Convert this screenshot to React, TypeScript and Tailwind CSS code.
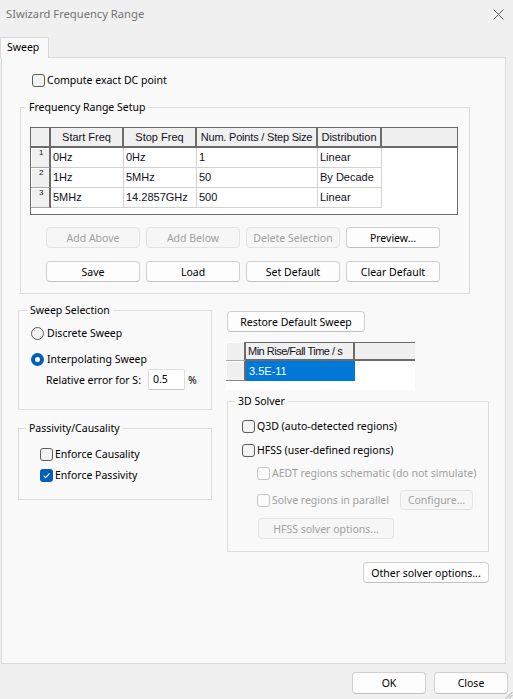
import React from "react";

function Check({ checked = false, disabled = false }: { checked?: boolean; disabled?: boolean }) {
  if (checked) {
    return (
      <span className="w-[13px] h-[13px] rounded-[3px] bg-[#005fb8] flex items-center justify-center shrink-0">
        <svg width="9" height="9" viewBox="0 0 9 9">
          <path d="M1.6 4.7 L3.6 6.6 L7.5 2.3" fill="none" stroke="#ffffff" strokeWidth="1.1" />
        </svg>
      </span>
    );
  }
  return disabled ? (
    <span className="w-[13px] h-[13px] rounded-[3px] border border-[#c6c6c6] bg-[#fbfbfb] shrink-0" />
  ) : (
    <span className="w-[13px] h-[13px] rounded-[3px] border border-[#5c5c5c] bg-[#f3f3f3] shrink-0" />
  );
}

function Radio({ checked = false }: { checked?: boolean }) {
  return checked ? (
    <span className="w-[13px] h-[13px] rounded-full bg-[#005fb8] flex items-center justify-center shrink-0">
      <span className="w-[5px] h-[5px] rounded-full bg-white" />
    </span>
  ) : (
    <span className="w-[13px] h-[13px] rounded-full border border-[#5c5c5c] bg-[#f3f3f3] shrink-0" />
  );
}

function Btn({ children, className = "", disabled = false }: { children: React.ReactNode; className?: string; disabled?: boolean }) {
  return (
    <div
      className={
        disabled
          ? `flex items-center justify-center whitespace-nowrap rounded-[4px] border border-[#e3e3e3] bg-[#f6f6f6] text-[#a0a0a0] ${className}`
          : `flex items-center justify-center whitespace-nowrap rounded-[4px] border border-[#d0d0d0] border-b-[#c0c0c0] bg-[#fdfdfd] text-black ${className}`
      }
    >
      {children}
    </div>
  );
}

const rows = [
  ["1", "0Hz", "0Hz", "1", "Linear"],
  ["2", "1Hz", "5MHz", "50", "By Decade"],
  ["3", "5MHz", "14.2857GHz", "500", "Linear"],
];

function FreqTable() {
  return (
    <div className="mt-[12px] ml-[9px] w-[428px] h-[88px] border border-[#6b6b6b] bg-white font-['Liberation_Sans',Arial,sans-serif] text-[11px] text-[#101020] whitespace-nowrap">
      <div className="flex h-[20px] bg-[#f0f0f0]">
        <div className="w-[20px] border-r-2 border-b-2 border-[#6b6b6b]" />
        <div className="w-[73px] border-r-2 border-b-2 border-[#6b6b6b] text-center leading-[18px]">Start Freq</div>
        <div className="w-[73px] border-r-2 border-b-2 border-[#6b6b6b] text-center leading-[18px]">Stop Freq</div>
        <div className="w-[121px] border-r-2 border-b-2 border-[#6b6b6b] text-center leading-[18px] tracking-[-0.2px]">Num. Points / Step Size</div>
        <div className="w-[64px] border-r-2 border-b-2 border-[#6b6b6b] text-center leading-[18px]">Distribution</div>
        <div className="flex-1 border-b-2 border-[#6b6b6b]" />
      </div>
      {rows.map((r) => (
        <div key={r[0]} className="flex h-[20px]">
          <div className="w-[20px] bg-[#f0f0f0] border-r-2 border-r-[#6b6b6b] border-b border-b-[#a8a8a8] shadow-[inset_1px_1px_0_#ffffff] text-[8px] leading-[10px] pl-[8px]">
            {r[0]}
          </div>
          <div className="w-[73px] border-r border-b border-[#d2d2d2] pl-[2px] leading-[19px]">{r[1]}</div>
          <div className="w-[73px] border-r border-b border-[#d2d2d2] pl-[2px] leading-[19px]">{r[2]}</div>
          <div className="w-[121px] border-r border-b border-[#d2d2d2] pl-[2px] leading-[19px]">{r[3]}</div>
          <div className="w-[64px] border-r border-b border-[#d2d2d2] pl-[2px] leading-[19px]">{r[4]}</div>
        </div>
      ))}
    </div>
  );
}

function RiseTable() {
  return (
    <div className="mt-[10px] w-[189px] h-[48px] bg-white font-['Liberation_Sans',Arial,sans-serif] text-[11px] text-[#101020] whitespace-nowrap">
      <div className="flex h-[19px] bg-[#f0f0f0]">
        <div className="w-[20px] border-r-2 border-b border-r-[#6b6b6b] border-b-[#a8a8a8] shadow-[inset_1px_1px_0_#ffffff]" />
        <div className="w-[109px] overflow-hidden border-t border-r-2 border-b-2 border-[#6b6b6b] pl-[2px] leading-[16px] tracking-[-0.5px]">Min Rise/Fall Time / s</div>
        <div className="flex-1 border-t border-b-2 border-[#6b6b6b]" />
      </div>
      <div className="flex h-[20px]">
        <div className="w-[20px] bg-[#f0f0f0] border-r-2 border-b border-r-[#6b6b6b] border-b-[#8a8a8a] shadow-[inset_1px_1px_0_#ffffff]" />
        <div className="w-[109px] bg-[#0078d7] text-white pl-[3px] leading-[20px]">3.5E-11</div>
      </div>
    </div>
  );
}

export default function App() {
  return (
    <div className="w-[513px] h-[699px] bg-[#f0f0f0] relative overflow-hidden font-['Noto_Sans','Open_Sans',sans-serif] text-[10.5px] leading-[16px] text-black whitespace-nowrap">
      {/* Title bar */}
      <div className="h-[28px] flex items-center justify-between pl-[6px] pr-[9px]">
        <span className="text-[#737373] text-[11.2px]">SIwizard Frequency Range</span>
        <svg width="11" height="11" viewBox="0 0 11 11">
          <path d="M0.5 0.5 L10.5 10.5 M10.5 0.5 L0.5 10.5" stroke="#5a5a5a" strokeWidth="1" />
        </svg>
      </div>

      {/* Tab */}
      <div className="relative z-10 mt-[9px] -mb-[1px] w-[49px] h-[21px] border border-b-0 border-[#d9d9d9] bg-[#f9f9f9] pl-[6px] leading-[19px]">
        Sweep
      </div>

      {/* Panel */}
      <div className="ml-[1px] w-[505px] h-[607px] border border-[#dadada] bg-[#f9f9f9]">
        <div className="mt-[14px] ml-[30px] flex items-center gap-[2px] h-[16px]">
          <Check />
          <span>Compute exact DC point</span>
        </div>

        <fieldset className="mt-[11px] ml-[18px] w-[450px] border border-[#dcdcdc] pb-[11px]">
          <legend className="ml-[5px] px-[3px] leading-[16px]">Frequency Range Setup</legend>
          <FreqTable />
          <div className="mt-[12px] ml-[25px] flex gap-[6px]">
            <Btn disabled className="w-[94px] h-[21px]">Add Above</Btn>
            <Btn disabled className="w-[94px] h-[21px]">Add Below</Btn>
            <Btn disabled className="w-[94px] h-[21px]">Delete Selection</Btn>
            <Btn className="w-[94px] h-[21px]">Preview...</Btn>
          </div>
          <div className="mt-[13px] ml-[25px] flex gap-[6px]">
            <Btn className="w-[94px] h-[21px]">Save</Btn>
            <Btn className="w-[94px] h-[21px]">Load</Btn>
            <Btn className="w-[94px] h-[21px]">Set Default</Btn>
            <Btn className="w-[94px] h-[21px]">Clear Default</Btn>
          </div>
        </fieldset>

        <div className="flex">
          {/* Left column */}
          <div className="ml-[16px] w-[194px] flex flex-col">
            <fieldset className="mt-[8px] border border-[#dcdcdc] pb-[19px]">
              <legend className="ml-[8px] px-[3px] leading-[16px]">Sweep Selection</legend>
              <div className="mt-[7px] ml-[12px] h-[16px] flex items-center gap-[3px]">
                <Radio />
                <span>Discrete Sweep</span>
              </div>
              <div className="mt-[10px] ml-[12px] h-[16px] flex items-center gap-[3px]">
                <Radio checked />
                <span>Interpolating Sweep</span>
              </div>
              <div className="mt-[2px] ml-[27px] h-[21px] flex items-center">
                <span className="w-[102px]">Relative error for S:</span>
                <div className="w-[37px] h-[21px] border border-[#dedede] border-b-[#c4c4c4] rounded-[2px] bg-white pl-[4px] leading-[19px]">0.5</div>
                <span className="ml-[3px]">%</span>
              </div>
            </fieldset>

            <fieldset className="mt-[10px] border border-[#dcdcdc] pb-[16px]">
              <legend className="ml-[7px] px-[3px] leading-[16px]">Passivity/Causality</legend>
              <div className="mt-[10px] ml-[21px] h-[16px] flex items-center gap-[2px]">
                <Check />
                <span>Enforce Causality</span>
              </div>
              <div className="mt-[5px] ml-[21px] h-[16px] flex items-center gap-[2px]">
                <Check checked />
                <span>Enforce Passivity</span>
              </div>
            </fieldset>
          </div>

          {/* Right column */}
          <div className="ml-[14px] w-[263px] flex flex-col">
            <Btn className="mt-[17px] ml-[1px] w-[138px] h-[21px]">Restore Default Sweep</Btn>
            <RiseTable />
            <fieldset className="mt-[3px] ml-[1px] w-[262px] border border-[#dcdcdc] pb-[12px]">
              <legend className="ml-[7px] px-[3px] leading-[16px]">3D Solver</legend>
              <div className="mt-[9px] ml-[14px] h-[16px] flex items-center gap-[2px]">
                <Check />
                <span>Q3D (auto-detected regions)</span>
              </div>
              <div className="mt-[8px] ml-[14px] h-[16px] flex items-center gap-[2px]">
                <Check />
                <span>HFSS (user-defined regions)</span>
              </div>
              <div className="mt-[7px] ml-[29px] h-[16px] flex items-center gap-[2px] text-[#a0a0a0]">
                <Check disabled />
                <span>AEDT regions schematic (do not simulate)</span>
              </div>
              <div className="mt-[9px] ml-[29px] h-[20px] flex items-center text-[#a0a0a0]">
                <Check disabled />
                <span className="ml-[2px] w-[128px]">Solve regions in parallel</span>
                <Btn disabled className="w-[73px] h-[20px]">Configure...</Btn>
              </div>
              <Btn disabled className="mt-[8px] ml-[30px] w-[136px] h-[21px]">HFSS solver options...</Btn>
            </fieldset>
            <Btn className="mt-[10px] self-end w-[126px] h-[21px]">Other solver options...</Btn>
          </div>
        </div>
      </div>

      {/* Footer */}
      <div className="mt-[8px] flex justify-end gap-[8px] pr-[5px]">
        <Btn className="w-[74px] h-[22px]">OK</Btn>
        <Btn className="w-[74px] h-[22px]">Close</Btn>
      </div>

      {/* Resize grip */}
      <svg className="absolute right-0 bottom-0" width="9" height="9" viewBox="0 0 9 9">
        <path d="M8.5 2 L2 8.5 M8.5 5 L5 8.5" stroke="#a8a8a8" strokeWidth="1" />
      </svg>
    </div>
  );
}
